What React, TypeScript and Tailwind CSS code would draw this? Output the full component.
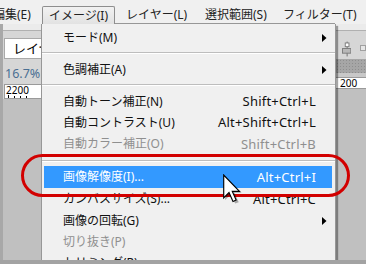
import React from 'react';

type Item = {
  label: string;
  shortcut?: string;
  sub?: boolean;
  disabled?: boolean;
  active?: boolean;
  h: string;
};

function Arrow({ white }: { white?: boolean }) {
  return (
    <svg width="5" height="8" viewBox="0 0 5 8" className="block">
      <path d="M0 0 L4.5 4 L0 8 Z" fill={white ? '#fff' : '#000'} />
    </svg>
  );
}

function MenuRow({ item }: { item: Item }) {
  const color = item.active
    ? 'text-white'
    : item.disabled
      ? 'text-[#8f8f8f]'
      : 'text-[#111]';
  return (
    <div
      className={`ml-[2px] mr-[3px] flex items-center pl-[19px] pr-[5px] text-[12px] leading-none ${item.h} ${color} ${
        item.active ? 'bg-[#3399ff]' : ''
      }`}
    >
      <span className="flex-1 whitespace-nowrap">{item.label}</span>
      {item.shortcut && (
        <span className="whitespace-nowrap text-[13px] tracking-[0.2px]">{item.shortcut}</span>
      )}
      <span className="flex w-[11px] justify-end">{item.sub && <Arrow white={item.active} />}</span>
    </div>
  );
}

function Separator({ top, h }: { top: string; h: string }) {
  return (
    <div className={`${h} ${top}`}>
      <div className="h-px bg-[#bdbdbd]" />
      <div className="h-px bg-white" />
    </div>
  );
}

function DropMenu() {
  return (
    <div className="absolute left-[41px] top-[24px] h-[260px] w-[295px] border-x border-[#979797] bg-[#f0f0f0] pt-[3px] shadow-[2px_2px_1px_rgba(0,0,0,0.35)]">
      <div className="absolute left-[73px] right-0 top-[-1px] h-px bg-[#979797]" />
      <MenuRow item={{ label: 'モード(M)', sub: true, h: 'h-[22px]' }} />
      <Separator h="h-[10px]" top="pt-[3px]" />
      <MenuRow item={{ label: '色調補正(A)', sub: true, h: 'h-[22px]' }} />
      <Separator h="h-[10px]" top="pt-[3px]" />
      <MenuRow item={{ label: '自動トーン補正(N)', shortcut: 'Shift+Ctrl+L', h: 'h-[21px]' }} />
      <MenuRow item={{ label: '自動コントラスト(U)', shortcut: 'Alt+Shift+Ctrl+L', h: 'h-[21px]' }} />
      <MenuRow item={{ label: '自動カラー補正(O)', shortcut: 'Shift+Ctrl+B', disabled: true, h: 'h-[22px]' }} />
      <Separator h="h-[11px]" top="pt-[5px]" />
      <MenuRow item={{ label: '画像解像度(I)...', shortcut: 'Alt+Ctrl+I', active: true, h: 'h-[22px]' }} />
      <MenuRow item={{ label: 'カンバスサイズ(S)...', shortcut: 'Alt+Ctrl+C', h: 'h-[22px]' }} />
      <MenuRow item={{ label: '画像の回転(G)', sub: true, h: 'h-[21px]' }} />
      <MenuRow item={{ label: '切り抜き(P)', disabled: true, h: 'h-[21px]' }} />
      <MenuRow item={{ label: 'トリミング(R)...', h: 'h-[21px]' }} />
    </div>
  );
}

function MenuBar() {
  return (
    <div className="flex h-[24px] items-end bg-[#f0f0f0] text-[12px] leading-none text-[#222]">
      <div className="ml-[-7px] flex h-[18px] w-[49px] items-center">編集(E)</div>
      <div className="flex h-[18px] w-[73px] items-center rounded-t-[2px] border-x border-t border-[#8e8e8e] bg-gradient-to-b from-[#f2f2f2] to-[#e2e2e2] pl-[6px]">
        イメージ(I)
      </div>
      <div className="flex h-[18px] w-[90px] items-center pl-[11px]">レイヤー(L)</div>
      <div className="flex h-[18px] w-[78px] items-center">選択範囲(S)</div>
      <div className="flex h-[18px] items-center whitespace-nowrap">フィルター(T)</div>
    </div>
  );
}

function LeftPanel() {
  return (
    <div className="flex w-[42px] flex-col border-l-[3px] border-[#a8a8a8] bg-[#d6d6d6]">
      <div className="h-[7px] border-b border-[#b0b0b0] bg-[#ebebeb]" />
      <div className="ml-[1px] mt-[7px] flex h-[21px] items-center overflow-hidden whitespace-nowrap border border-[#a9a9a9] bg-white pl-[8px] text-[13px] text-black">
        レイヤー
      </div>
      <div className="mt-[8px] h-[13px] pl-[2px] text-[12.5px] leading-[13px] text-[#4a6f93]">16.7%</div>
      <div className="ml-[1px] mt-[4px] h-[15px] border border-[#9a9a9a] bg-white pl-[1px] text-[10px] leading-[10px] text-black">
        <div className="h-[10px]">2200</div>
        <div className="flex h-[3px] items-end gap-[5px] pl-[2px]">
          <div className="h-[3px] w-px bg-black" />
          <div className="h-[2px] w-px bg-black" />
          <div className="h-[2px] w-px bg-black" />
          <div className="h-[2px] w-px bg-black" />
        </div>
      </div>
      <div className="flex-1 bg-[#c0c0c0]" />
    </div>
  );
}

function RightPanel() {
  return (
    <div className="flex w-[30px] flex-col bg-[#d6d6d6]">
      <div className="h-[7px] border-b border-[#b0b0b0] bg-[#ebebeb]" />
      <div className="flex h-[28px] items-start gap-[9px] pl-[6px] pt-[10px]">
        <svg width="10" height="16" viewBox="0 0 10 16">
          <rect x="5" y="0" width="1" height="16" fill="#6d6d6d" />
          <rect x="3.5" y="1.5" width="4" height="4" fill="#fff" stroke="#7a7a7a" />
          <rect x="0.5" y="7.5" width="9" height="5" fill="#b8b8b8" stroke="#7a7a7a" />
        </svg>
        <div className="mt-[4px] h-[6px] w-[6px] border border-[#a0a0a0] bg-[#e6e6e6]" />
      </div>
      <div className="h-[14px] bg-[#a6a6a6] bg-[radial-gradient(#8e8e8e_1px,transparent_1px)] bg-[length:3px_3px]" />
      <div className="h-[4px] bg-[#c8c8c8]" />
      <div className="h-[12px] border-y border-[#9a9a9a] bg-white pl-[4px] text-[10px] leading-[10px] text-black">
        200
      </div>
      <div className="flex-1 bg-[#c0c0c0]" />
    </div>
  );
}

function Cursor() {
  return (
    <svg
      width="20"
      height="32"
      viewBox="0 0 14 22"
      className="absolute left-[223px] top-[174px]"
    >
      <path
        d="M1.5 1.5 L1.5 18 L5.5 14 L8.5 20.5 L11 19.5 L8 13 L13 13 Z"
        fill="rgba(0,0,0,0.3)"
      />
      <path
        d="M0.5 0.5 L0.5 16.5 L4.2 12.8 L7 19 L9.2 18 L6.5 12 L11.5 12 Z"
        fill="#fff"
        stroke="#000"
        strokeWidth="0.8"
        strokeLinejoin="miter"
      />
    </svg>
  );
}

export default function App() {
  return (
    <div className="relative flex h-[264px] w-[366px] flex-col overflow-hidden border-b-4 border-[#a3a3a3] bg-[#c0c0c0] font-['Noto_Sans','Noto_Sans_CJK_JP',sans-serif]">
      <MenuBar />
      <div className="flex flex-1">
        <LeftPanel />
        <div className="flex-1" />
        <RightPanel />
      </div>
      <DropMenu />
      <div className="absolute left-[21px] top-[154px] h-[43px] w-[329px] rounded-full border-[3px] border-[#d20000]" />
      <Cursor />
    </div>
  );
}
